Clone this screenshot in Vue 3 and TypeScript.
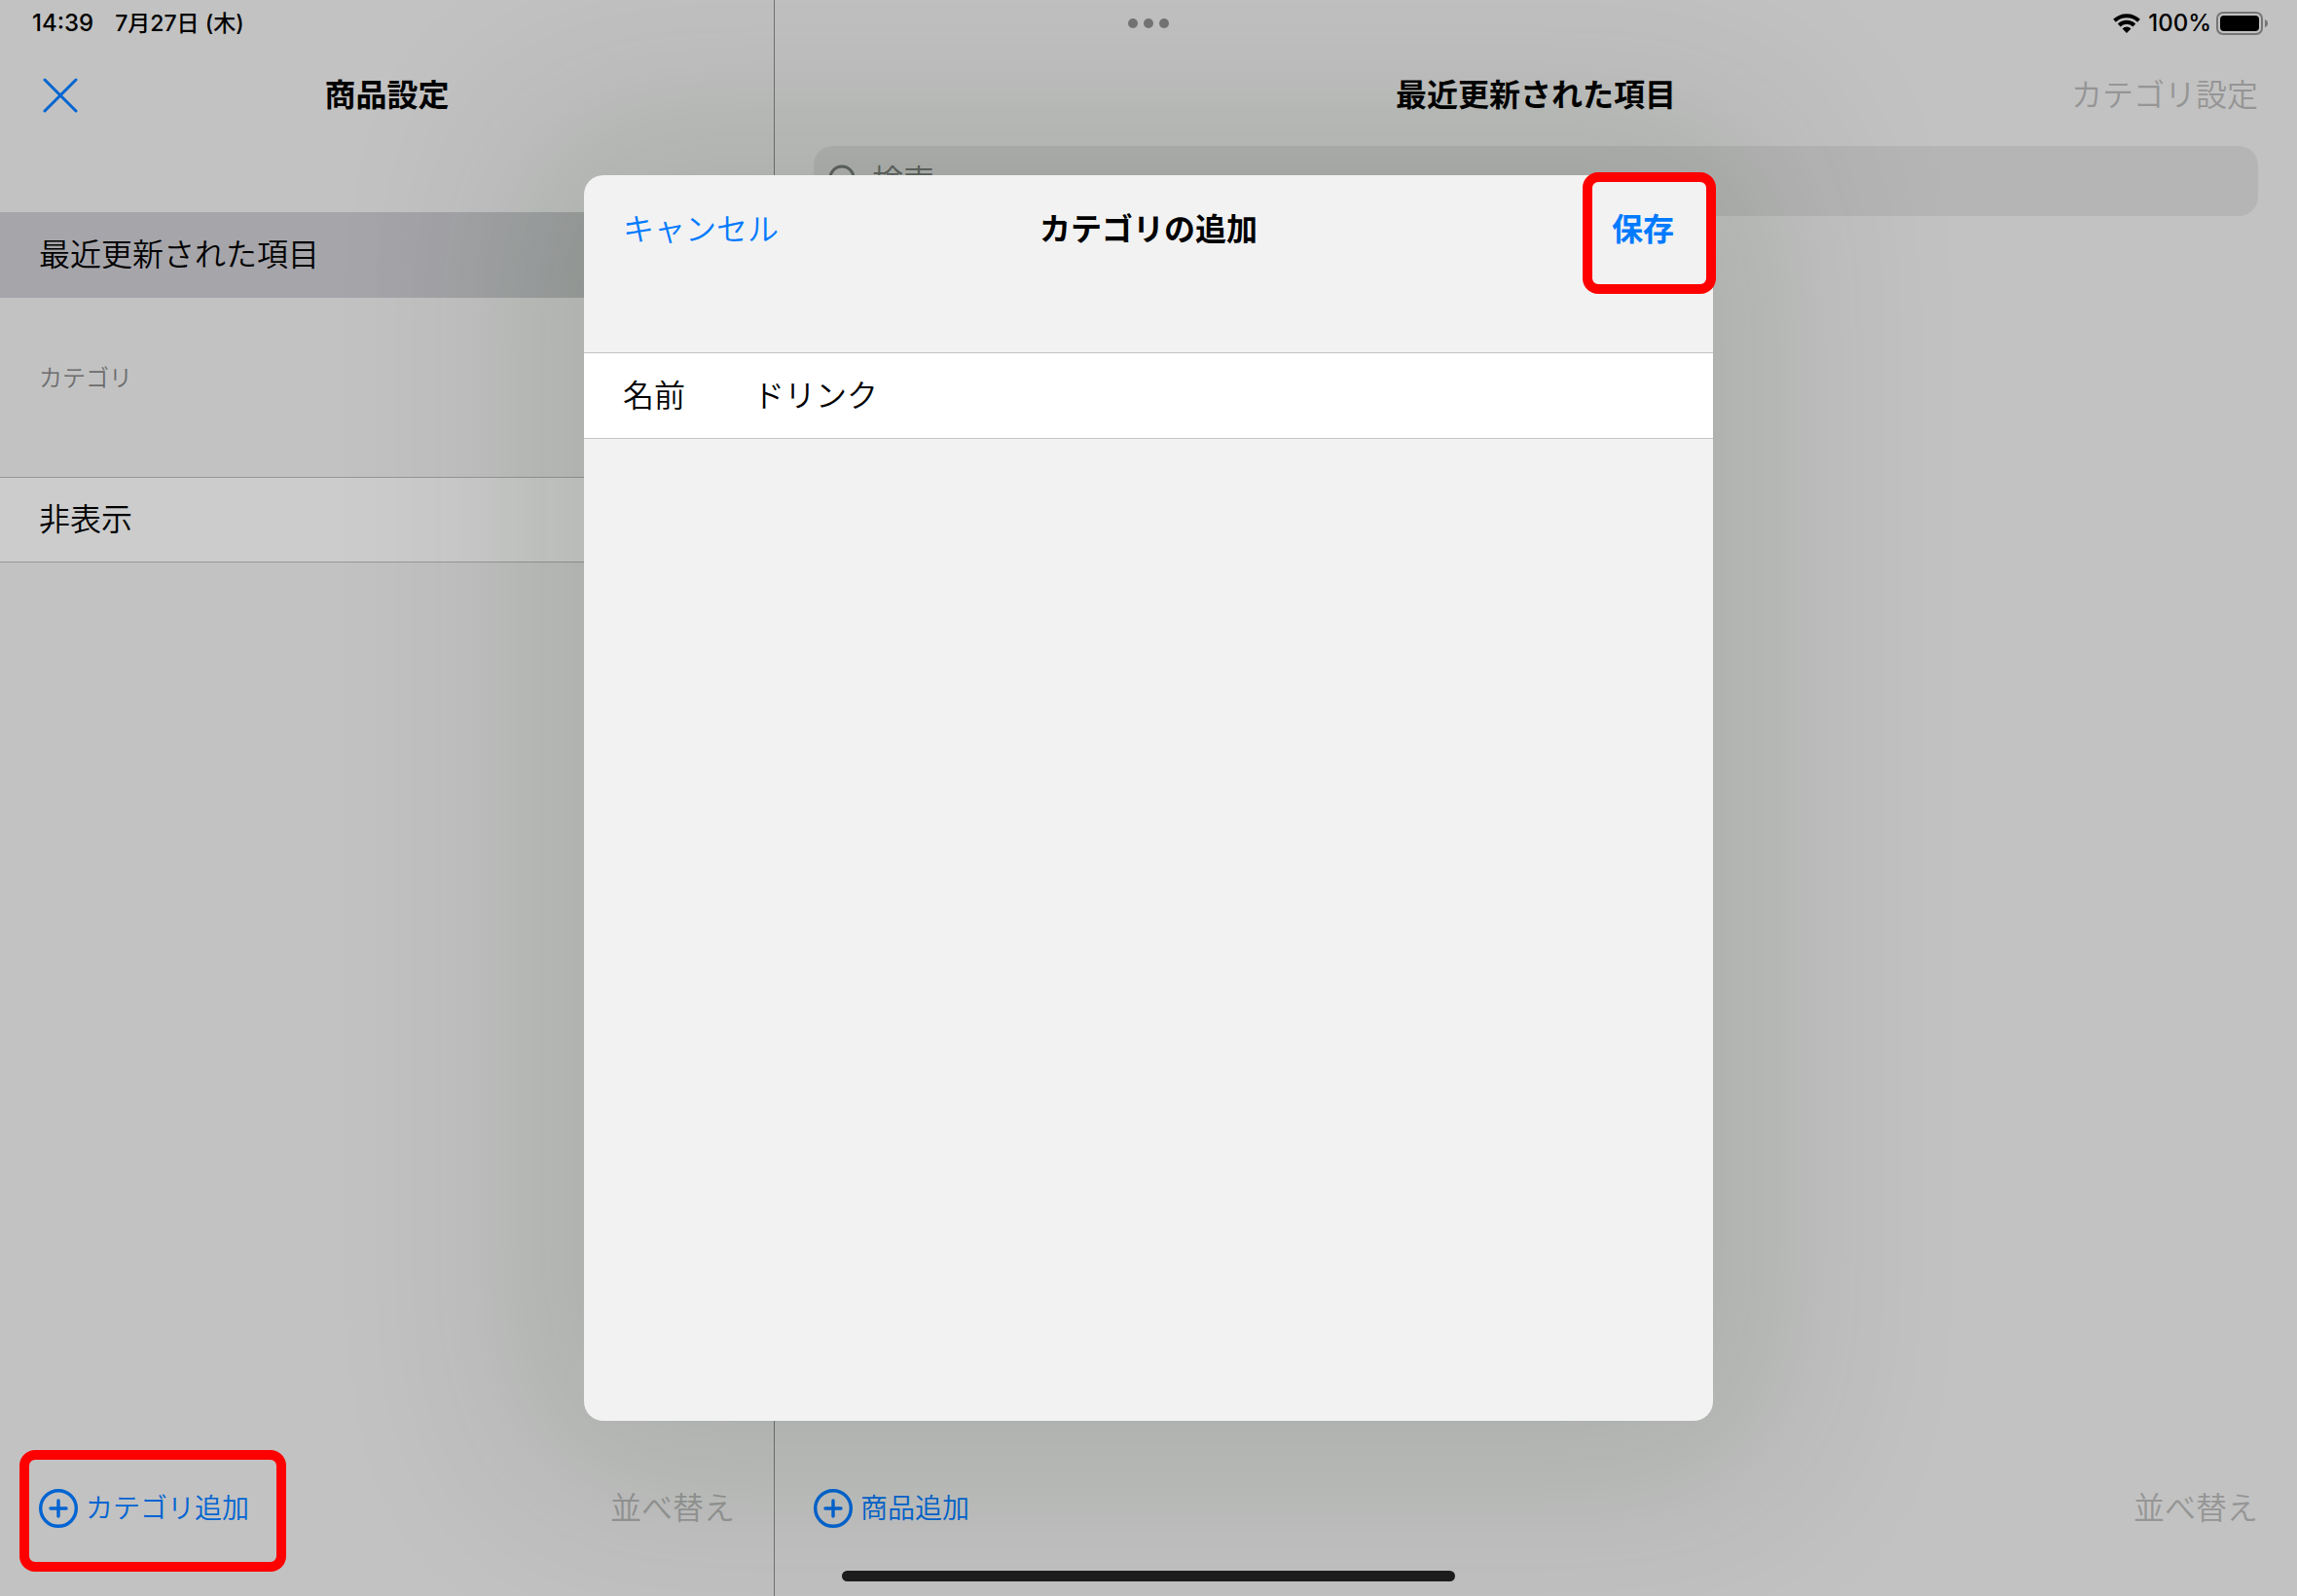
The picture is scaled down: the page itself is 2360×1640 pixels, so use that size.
<script setup lang="ts">
import { ref } from 'vue'

const categoryName = ref('ドリンク')
const keyword = ref('')
const dots = [0, 1, 2]
</script>

<template>
  <div class="app">
    <header class="status">
      <div class="status-left">
        <span>14:39</span>
        <span class="date">7月27日 (木)</span>
      </div>
      <div class="dots"><i v-for="d in dots" :key="d"></i></div>
      <div class="status-right">
        <svg class="wifi" viewBox="0 0 28 20" aria-hidden="true">
          <g fill="none" stroke="#000" stroke-width="4">
            <path d="M1.5 7.2A18 18 0 0 1 26.5 7.2" />
            <path d="M6.2 12A11.2 11.2 0 0 1 21.8 12" />
          </g>
          <path d="M14 20L9.6 15.4A6.3 6.3 0 0 1 18.4 15.4Z" />
        </svg>
        <span>100%</span>
        <svg class="battery" viewBox="0 0 54 24" aria-hidden="true">
          <rect x="1" y="1" width="46" height="22" rx="6" fill="none" stroke="#757575" stroke-width="2" />
          <rect x="4" y="4" width="40" height="16" rx="4" />
          <path d="M50 8Q53 9 53 12T50 16Z" fill="#757575" />
        </svg>
      </div>
    </header>

    <aside class="panel sidebar">
      <div class="bar">
        <button class="close" type="button" aria-label="閉じる">
          <svg viewBox="0 0 36 36" aria-hidden="true">
            <path d="M2 2L34 34M34 2L2 34" fill="none" stroke="#0064d2" stroke-width="3" stroke-linecap="round" />
          </svg>
        </button>
        <h1>商品設定</h1>
        <span></span>
      </div>
      <nav>
        <a class="row selected" href="#recent">最近更新された項目</a>
        <h2>カテゴリ</h2>
        <a class="row plain" href="#hidden">非表示</a>
      </nav>
      <div class="tools">
        <button class="add marked" type="button">
          <svg viewBox="0 0 40 40" stroke-width="3.4" aria-hidden="true">
            <circle cx="20" cy="20" r="18.3" />
            <path d="M20 12V28M12 20H28" />
          </svg>
          カテゴリ追加
        </button>
        <button class="muted" type="button" disabled>並べ替え</button>
      </div>
    </aside>

    <main class="panel content">
      <div class="bar">
        <span></span>
        <h1>最近更新された項目</h1>
        <button class="muted" type="button" disabled>カテゴリ設定</button>
      </div>
      <label class="search">
        <svg viewBox="0 0 36 36" aria-hidden="true">
          <path d="M25 25L34 34" />
          <circle cx="15" cy="15" r="12" />
        </svg>
        <input v-model="keyword" type="search" placeholder="検索" aria-label="検索" />
      </label>
      <div class="tools">
        <button class="add" type="button">
          <svg viewBox="0 0 40 40" stroke-width="3.4" aria-hidden="true">
            <circle cx="20" cy="20" r="18.3" />
            <path d="M20 12V28M12 20H28" />
          </svg>
          商品追加
        </button>
        <button class="muted" type="button" disabled>並べ替え</button>
      </div>
    </main>

    <div class="overlay">
      <form class="sheet" role="dialog" aria-labelledby="sheet-title" @submit.prevent>
        <div class="sheet-bar">
          <button class="cancel" type="button">キャンセル</button>
          <h2 id="sheet-title">カテゴリの追加</h2>
          <button class="save marked" type="submit">保存</button>
        </div>
        <div class="field">
          <label for="category-name">名前</label>
          <input id="category-name" v-model="categoryName" type="text" />
        </div>
      </form>
    </div>

    <div class="home"></div>
  </div>
</template>

<style>
body {
  background: #c2c2c2;
}
</style>

<style scoped>
.app,
.app * {
  box-sizing: border-box;
}
.app {
  position: relative;
  display: flex;
  min-height: 100vh;
  overflow: hidden;
  background: #c2c2c2;
  color: #000;
  font: 350 32px/48px Inter, 'Noto Sans CJK JP', sans-serif;
}
button,
input {
  margin: 0;
  padding: 0;
  border: 0;
  outline: 0;
  background: none;
  color: inherit;
  font: inherit;
}
h1,
h2 {
  margin: 0;
  font-size: 32px;
  font-weight: 700;
}
a {
  color: inherit;
  text-decoration: none;
}
svg {
  display: block;
  flex: none;
}

.status {
  position: absolute;
  z-index: 1;
  top: 0;
  left: 0;
  right: 0;
  display: grid;
  grid-template-columns: 1fr auto 1fr;
  align-items: center;
  height: 48px;
  padding: 0 29px;
  font-weight: 500;
  font-size: 24px;
  line-height: 32px;
}
.status-left {
  display: flex;
  gap: 22px;
  padding-left: 4px;
}
.date {
  font-size: 23px;
}
.status-right {
  display: flex;
  align-items: center;
  justify-content: flex-end;
}
.dots {
  display: flex;
  gap: 6px;
}
.dots i {
  width: 10px;
  height: 10px;
  border-radius: 50%;
  background: #757575;
}
.wifi {
  width: 28px;
  height: 20px;
  margin-right: 8px;
}
.battery {
  width: 54px;
  height: 24px;
  margin-left: 5px;
}

.panel {
  display: flex;
  flex-direction: column;
  min-height: 100vh;
  padding: 46px 0 40px;
}
.sidebar {
  flex: none;
  width: 796px;
  border-right: 1px solid #707270;
}
.content {
  flex: 1;
  min-width: 0;
}
.bar {
  display: grid;
  grid-template-columns: 1fr auto 1fr;
  align-items: center;
  height: 104px;
  padding: 0 40px;
}
.bar > :last-child {
  justify-self: end;
}
.close {
  justify-self: start;
  padding-left: 4px;
}
.close svg {
  width: 36px;
  height: 36px;
}
.muted {
  color: #959595;
}
nav {
  margin-top: 68px;
}
.row {
  display: flex;
  align-items: center;
  height: 88px;
  padding: 0 40px;
}
.selected {
  background: linear-gradient(to right, #a6a5aa 45%, #a0a2a3 75%);
}
.plain {
  border: solid #979797;
  border-width: 1px 0;
  background: #cccccc;
}
nav h2 {
  height: 184px;
  padding: 65px 40px 0;
  color: #6c6c6e;
  font-size: 24px;
  font-weight: 350;
  line-height: 36px;
}
.tools {
  display: flex;
  align-items: center;
  justify-content: space-between;
  height: 100px;
  margin-top: auto;
  padding: 0 40px;
}
.add {
  display: flex;
  align-items: center;
  gap: 8px;
  color: #0064d2;
  font-size: 28px;
}
.add svg {
  width: 40px;
  height: 40px;
  fill: none;
  stroke: #0064d2;
  stroke-linecap: round;
}
.search {
  display: flex;
  align-items: center;
  gap: 10px;
  height: 72px;
  margin: 0 40px;
  padding: 0 14px;
  border-radius: 20px;
  background: #b5b5b5;
}
.search svg {
  width: 36px;
  height: 36px;
  fill: none;
  stroke: #626462;
  stroke-width: 3;
}
.search input {
  flex: 1;
  min-width: 0;
}
.search input::placeholder {
  color: #626462;
  opacity: 1;
}

.overlay {
  position: absolute;
  z-index: 2;
  inset: 0;
  display: flex;
  align-items: center;
  justify-content: center;
}
.sheet {
  width: 1160px;
  max-width: 90%;
  height: 1280px;
  max-height: 90%;
  border-radius: 20px;
  background: #f2f2f2;
  box-shadow: 0 0 200px 64px rgba(8, 36, 0, 0.13);
}
.sheet-bar {
  display: grid;
  grid-template-columns: 1fr auto 1fr;
  height: 112px;
  padding: 0 40px;
}
.sheet-bar h2 {
  line-height: 112px;
}
.cancel {
  justify-self: start;
  color: #007aff;
}
.save {
  justify-self: end;
  color: #007aff;
  font-weight: 700;
}
.field {
  display: flex;
  align-items: center;
  height: 89px;
  margin-top: 70px;
  padding: 0 40px;
  border: solid #c4c4c6;
  border-width: 1px 0;
  background: #fff;
}
.field label {
  width: 134px;
}
.field input {
  flex: 1;
  min-width: 0;
}

.marked {
  position: relative;
}
.marked::after {
  content: '';
  position: absolute;
  border: 10px solid #f00;
  border-radius: 16px;
}
.add.marked::after {
  inset: -36px -38px -41px -20px;
}
.save.marked::after {
  inset: -3px -43px -10px -30px;
}

.home {
  position: absolute;
  z-index: 3;
  bottom: 15px;
  left: 50%;
  width: 630px;
  height: 11px;
  margin-left: -315px;
  border-radius: 6px;
  background: #1c1c1c;
}
</style>
